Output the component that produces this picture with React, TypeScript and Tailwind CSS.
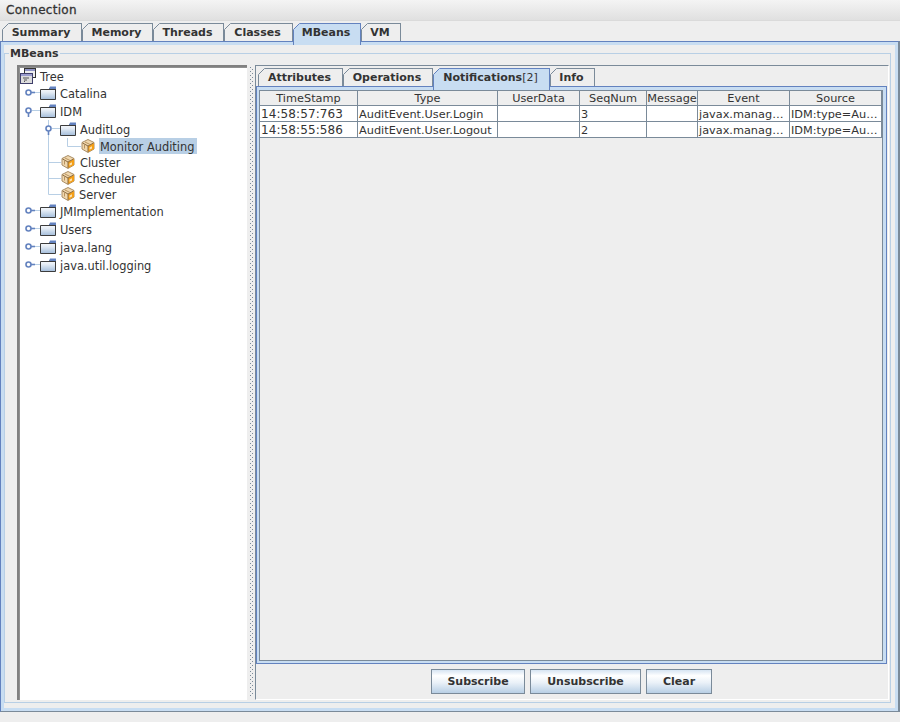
import React from "react";

const F = "[font-family:'DejaVu_Sans',sans-serif]";

function Tab({ label, w, active }: { label: React.ReactNode; w: number; active?: boolean }) {
  return (
    <div
      className={`relative shrink-0 border-t border-r border-l pr-[2px] text-center text-[11px] leading-[17px] font-bold text-[#333333] ${
        active ? "bg-[#c8ddf2] border-[#6382bf] z-10 h-[22px] -mb-[4px]" : "bg-[#eeeeee] border-[#7a8a99] h-[18px]"
      }`}
      style={{ width: w }}
    >
      <svg className="absolute -left-px -top-px" width="7" height="7">
        <path d="M0 0H7V0L0 7Z" fill="#eeeeee" />
        <path d="M0.5 6.5L6.5 0.5" stroke={active ? "#6382bf" : "#7a8a99"} fill="none" />
      </svg>
      {label}
    </div>
  );
}

function Folder() {
  return (
    <svg width="16" height="14" viewBox="0 0 16 14" className="shrink-0">
      <defs>
        <linearGradient id="fg" x1="0" y1="0" x2="0" y2="1">
          <stop offset="0" stopColor="#ffffff" />
          <stop offset="0.4" stopColor="#e6edf5" />
          <stop offset="1" stopColor="#a3bddb" />
        </linearGradient>
      </defs>
      <path d="M0.5 3.5H9L10.5 1.5H15.5V13.5H0.5Z" fill="url(#fg)" stroke="#3c3c3c" />
      <path d="M10 0.5H16V3H9Z" fill="#6382bf" />
      <path d="M1 3.5H15.5" stroke="#3c3c3c" />
    </svg>
  );
}

function Bean() {
  return (
    <svg width="14" height="14" viewBox="0 0 14 14" className="shrink-0">
      <path d="M1 3.5L7 0.5L13 3.5V10L7 13.5L1 10Z" fill="#f0d7ae" stroke="#a98d66" />
      <path d="M7 7L13 4V10L7 13Z" fill="#f59f16" />
      <path d="M1.5 4L7 7V13M7 7L12.5 4" fill="none" stroke="#8a6a3f" />
      <path d="M3.5 6V9.5M4 3L9 5.5" stroke="#b8935f" fill="none" />
      <path d="M8.5 8.5L11 7.2V9.5L8.5 10.8Z" fill="#fbe2b4" />
    </svg>
  );
}

function RootIcon() {
  return (
    <svg width="17" height="16" viewBox="0 0 17 16" className="shrink-0">
      <rect x="4.5" y="0.5" width="11" height="9" fill="#eeeeee" stroke="#333333" />
      <rect x="5" y="1" width="10" height="2" fill="#8f93c4" />
      <rect x="0.5" y="5.5" width="12" height="10" fill="#dcdcdc" stroke="#3f3f6a" />
      <rect x="1" y="6" width="11" height="2" fill="#9a9ccd" />
      <path d="M3 10H9M4 12H7M4 13.5H5" stroke="#555555" />
    </svg>
  );
}

type G = { w: number; h: number; d: string; handle?: [number, number, boolean] };

function Guide({ w, h, d, handle }: G) {
  return (
    <svg width={w} height={h} className="shrink-0">
      <path d={d} stroke="#b8cfe5" fill="none" />
      {handle && (
        <g>
          <path
            d={handle[2] ? `M${handle[0] + 0.5} ${handle[1]}v7` : `M${handle[0]} ${handle[1] + 0.5}h7`}
            stroke="#6382bf"
            strokeWidth="1.6"
          />
          <circle cx={handle[0] + 0.5} cy={handle[1] + 0.5} r="2.5" fill="#ffffff" stroke="#6382bf" strokeWidth="1.6" />
        </g>
      )}
    </svg>
  );
}

function Row({ h, g, icon, label, sel, gap = 4 }: { h: number; g: G; icon: React.ReactNode; label: string; sel?: boolean; gap?: number }) {
  return (
    <div className="flex items-center" style={{ height: h }}>
      <Guide {...g} />
      {icon}
      <span
        className={`h-[16px] text-[11.4px] leading-[18px] text-[#333333] whitespace-pre ${sel ? "bg-[#b8cfe5] pl-[1px] pr-[3px]" : ""}`}
        style={{ marginLeft: sel ? gap - 1 : gap }}
      >
        {label}
      </span>
    </div>
  );
}

const top = (h: number): G => ({ w: 20, h, d: "M12 8.5H20", handle: [8, 8, false] });

const COLS = [98, 140, 82, 67, 51, 92, 92];
const HEAD = ["TimeStamp", "Type", "UserData", "SeqNum", "Message", "Event", "Source"];
const ROWS = [
  ["14:58:57:763", "AuditEvent.User.Login", "", "3", "", "javax.manag…", "IDM:type=Au…"],
  ["14:58:55:586", "AuditEvent.User.Logout", "", "2", "", "javax.manag…", "IDM:type=Au…"],
];

export default function App() {
  return (
    <div className={`${F} w-[900px] h-[722px] bg-[#eeeeee] flex flex-col overflow-hidden text-[#333333]`}>
      <div className="h-[21px] shrink-0 flex items-center pl-[6px] text-[12px] bg-gradient-to-b from-[#f4f4f4] to-[#e0e0e0] border-b border-[#dadada]">
        <span className="tracking-[0.3px] [-webkit-text-stroke:0.3px_#333333]">Connection</span>
      </div>
      <div className="h-[20px] shrink-0 flex items-end pl-[2px]">
        <Tab label="Summary" w={80} />
        <Tab label="Memory" w={71} />
        <Tab label="Threads" w={71} />
        <Tab label="Classes" w={69} />
        <Tab label="MBeans" w={68} active />
        <Tab label="VM" w={40} />
      </div>
      <div className="h-[671px] w-[900px] shrink-0 border-t border-l border-r-2 border-b border-l-[#6382bf] border-t-[#6382bf] border-r-[#7a8a99] border-b-[#7a8a99]">
        <div className="h-full border-[3px] border-[#c8ddf2] pr-[4px] pt-[8px] pb-[5px] bg-[#eeeeee]">
          <div className="relative h-full border border-[#b8cfe5] pl-[12px] pt-[11px] flex">
            <span className="absolute left-[4px] -top-[8px] bg-[#eeeeee] px-[1px] text-[11px] leading-[16px] font-bold">MBeans</span>
            <div className="w-[230px] h-[635px] shrink-0 bg-white border-l-2 border-t-2 border-[#808080] pl-[1px] shadow-[inset_1px_1px_0_#909090]">
              <div className="h-[17px] flex items-center">
                <RootIcon />
                <span className="h-[16px] ml-[3px] text-[11.4px] leading-[18px]">Tree</span>
              </div>
              <Row h={18} g={top(18)} icon={<Folder />} label="Catalina" />
              <Row h={18} g={{ w: 20, h: 18, d: "M12 8.5H20", handle: [8, 8, true] }} icon={<Folder />} label="IDM" />
              <Row h={18} g={{ w: 40, h: 18, d: "M28.5 0V18M32 8.5H40", handle: [28, 8, true] }} icon={<Folder />} label="AuditLog" />
              <Row h={16} g={{ w: 61, h: 16, d: "M28.5 0V16M47.5 0V8.5H61" }} icon={<Bean />} label="Monitor Auditing" sel gap={5} />
              <Row h={16} g={{ w: 41, h: 16, d: "M28.5 0V16M28 8.5H41" }} icon={<Bean />} label="Cluster" gap={5} />
              <Row h={16} g={{ w: 41, h: 16, d: "M28.5 0V16M28 8.5H41" }} icon={<Bean />} label="Scheduler" gap={4} />
              <Row h={16} g={{ w: 41, h: 16, d: "M28.5 0V8.5H41" }} icon={<Bean />} label="Server" gap={4} />
              <Row h={18} g={top(18)} icon={<Folder />} label="JMImplementation" />
              <Row h={18} g={top(18)} icon={<Folder />} label="Users" />
              <Row h={18} g={top(18)} icon={<Folder />} label="java.lang" />
              <Row h={18} g={top(18)} icon={<Folder />} label="java.util.logging" />
            </div>
            <div className="w-[8px] h-[635px] shrink-0 pl-[3px] pt-[2px]">
              <svg width="4" height="629">
                <defs>
                  <pattern id="dots" width="4" height="4" patternUnits="userSpaceOnUse">
                    <rect x="0" y="0" width="1" height="1" fill="#7a8a99" />
                    <rect x="2" y="2" width="1" height="1" fill="#7a8a99" />
                  </pattern>
                </defs>
                <rect width="4" height="629" fill="url(#dots)" />
              </svg>
            </div>
            <div className="w-[634px] h-[635px] shrink-0 border-l border-t border-r border-b border-l-[#7a8a99] border-t-[#7a8a99] border-r-white border-b-white flex flex-col">
              <div className="h-[20px] shrink-0 flex items-end pl-[2px]">
                <Tab label="Attributes" w={85} />
                <Tab label="Operations" w={90} />
                <Tab label={<span>Notifications<span className="font-normal">[2]</span></span>} w={117} active />
                <Tab label="Info" w={45} />
              </div>
              <div className="h-[578px] w-[631px] shrink-0 border border-[#6382bf] bg-[#c8ddf2] pt-[3px] pl-[2px] pr-[3px] pb-[2px]">
                <div className="h-full border border-[#7a8a99] bg-[#eeeeee]">
                  <div
                    className="grid text-[11.3px]"
                    style={{ gridTemplateColumns: COLS.map((c) => `${c}px`).join(" ") }}
                  >
                    {HEAD.map((h) => (
                      <div key={h} className="h-[15px] border-r border-b border-[#7a8a99] text-center leading-[15px] overflow-hidden whitespace-nowrap">
                        {h}
                      </div>
                    ))}
                    {ROWS.flat().map((c, i) => (
                      <div
                        key={i}
                        className={`h-[16px] bg-white border-r border-b border-[#7a8a99] pl-[1px] leading-[17px] overflow-hidden whitespace-nowrap ${
                          i % 7 === 0 ? "text-[12px] tracking-[0.1px]" : ""
                        }`}
                      >
                        {c}
                      </div>
                    ))}
                  </div>
                </div>
              </div>
              <div className="w-[631px] flex justify-center gap-[5px] pt-[5px]">
                {[
                  ["Subscribe", 94],
                  ["Unsubscribe", 111],
                  ["Clear", 66],
                ].map(([t, w]) => (
                  <button
                    key={t}
                    className="h-[25px] border border-[#7a8a99] pt-[1px] text-[11px] font-bold bg-[linear-gradient(#d6e4f2_0%,#ffffff_25%,#eaf1f8_55%,#b8cfe5_100%)]"
                    style={{ width: w as number }}
                  >
                    {t}
                  </button>
                ))}
              </div>
            </div>
          </div>
        </div>
      </div>
    </div>
  );
}
